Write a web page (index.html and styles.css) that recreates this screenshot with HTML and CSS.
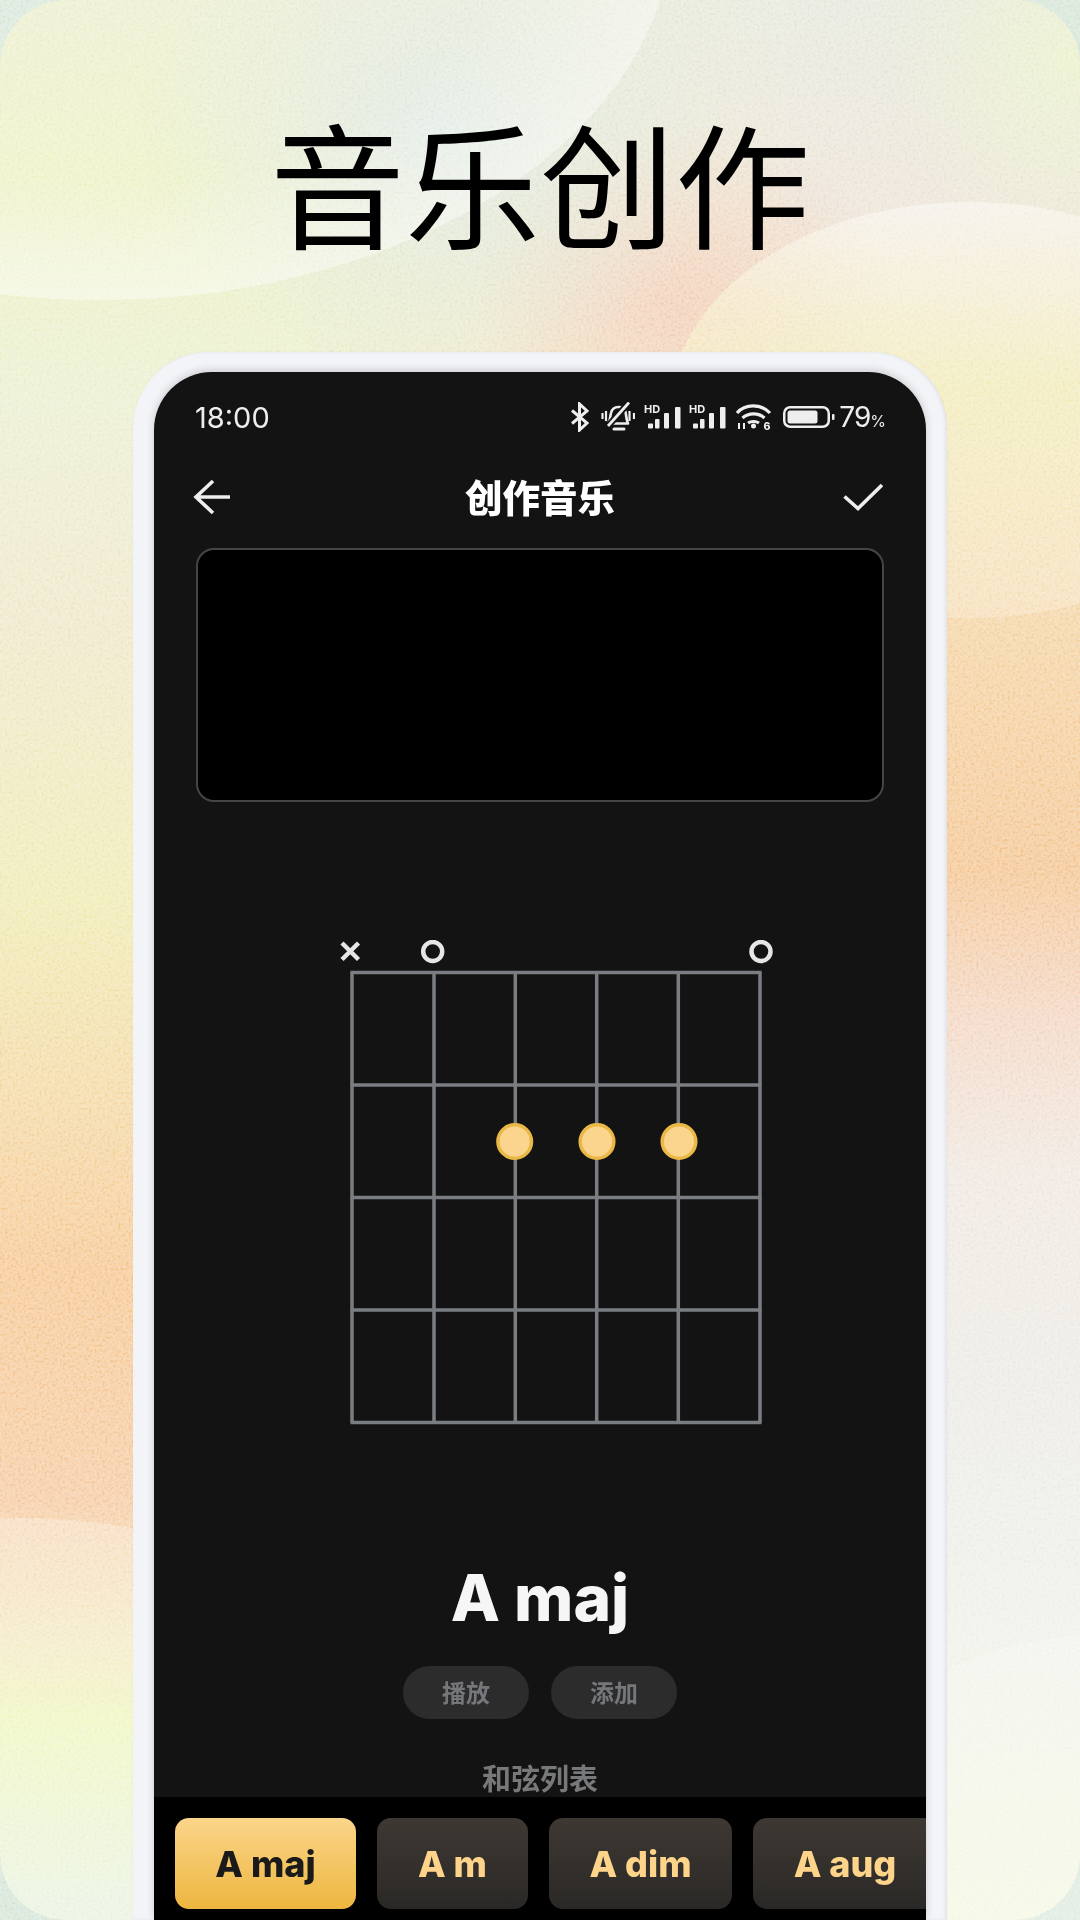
FILE: index.html
```html
<!DOCTYPE html>
<html lang="zh-CN">
<head>
  <meta charset="UTF-8" />
  <title>音乐创作</title>
  <link rel="stylesheet" href="styles.css">
</head>
<body>
  <div class="page">
    <!-- background wash -->
    <div class="wash wash-left"></div>
    <div class="wash wash-right"></div>
    <div class="wash wash-spots"></div>
    <div class="blob blob-top"></div>
    <div class="blob blob-right"></div>
    <div class="blob blob-bottom-left"></div>
    <div class="blob blob-bottom-right"></div>
    <svg class="grain" width="1080" height="1920">
      <filter id="grain-noise" x="0" y="0" width="100%" height="100%">
        <feTurbulence type="fractalNoise" baseFrequency="0.38" numOctaves="2" seed="4" />
        <feColorMatrix type="matrix" values="2.4 0 0 0 -0.7  2.4 0 0 0 -0.7  2.4 0 0 0 -0.7  0 0 0 0 1" />
      </filter>
      <rect width="1080" height="1920" filter="url(#grain-noise)" />
    </svg>

    <h1 class="headline">音乐创作</h1>

    <div class="phone">
      <div class="screen">
        <div class="status">
          <span class="time">18:00</span>
          <div class="status-icons">
            <svg class="ic-bt" width="20" height="30" viewBox="0 0 20 30">
              <path d="M2 8.500 17 21 9.500 28V2L17 9 2 21.500" fill="none" stroke="#eee" stroke-width="3" />
            </svg>
            <svg class="ic-bell" width="34" height="30" viewBox="0 0 34 30">
              <path d="M7 21.500c2.500-3 2-7 3-10.500 1-4 4-6 7.500-6 4 0 6 2 7 5 .8 3 .5 7 2.500 11.500z" fill="none" stroke="#eee" stroke-width="2.600" stroke-linejoin="round" />
              <path d="M13 27h10" stroke="#eee" stroke-width="3" stroke-linecap="round" />
              <path d="M7 24 28 .5" stroke="#131313" stroke-width="6.500" />
              <path d="M7 24 28 .5" stroke="#eee" stroke-width="2.800" />
              <path d="M1.500 11v6M5 9v10M28.500 9v10M33 11v6" stroke="#eee" stroke-width="2.200" />
            </svg>
            <svg class="ic-signal" width="37" height="28" viewBox="0 0 37 28">
              <text x="0" y="10" class="hd">HD</text>
              <rect x="4" y="20.500" width="5" height="5" rx="1" fill="#eee" />
              <rect x="11" y="16" width="4.500" height="9.500" rx="1" fill="#eee" />
              <rect x="20" y="10" width="5" height="15.500" rx="1" fill="#eee" />
              <rect x="31" y="4" width="5.500" height="21.500" rx="1" fill="#eee" />
            </svg>
            <svg class="ic-signal" width="37" height="28" viewBox="0 0 37 28">
              <text x="0" y="10" class="hd">HD</text>
              <rect x="4" y="20.500" width="5" height="5" rx="1" fill="#eee" />
              <rect x="11" y="16" width="4.500" height="9.500" rx="1" fill="#eee" />
              <rect x="20" y="10" width="5" height="15.500" rx="1" fill="#eee" />
              <rect x="31" y="4" width="5.500" height="21.500" rx="1" fill="#eee" />
            </svg>
            <svg class="ic-wifi" width="37" height="30" viewBox="0 0 37 30">
              <path d="M2 11C10 1.500 26 1.500 35 11M7.500 16c6-5.500 16-5.500 22 0M13 21c3-2 8-2 11 0" fill="none" stroke="#eee" stroke-width="3.200" />
              <circle cx="18.500" cy="24" r="2.500" fill="#eee" />
              <path d="M4 27v-6M9 27v-6" stroke="#eee" stroke-width="2" />
              <text x="28.500" y="28" class="wifi-six">6</text>
            </svg>
            <svg class="ic-batt" width="53" height="24" viewBox="0 0 53 24">
              <rect x="2.250" y="2.250" width="44.500" height="19.500" rx="6" fill="none" stroke="#eee" stroke-width="2.500" />
              <rect x="5.500" y="5.500" width="30" height="13" rx="2.500" fill="#eee" />
              <rect x="50" y="9" width="2.500" height="6" rx="1" fill="#eee" />
            </svg>
            <span class="batt-num">79<small>%</small></span>
          </div>
        </div>

        <div class="nav">
          <svg class="nav-back" width="40" height="36" viewBox="0 0 40 36">
            <path d="M37 18H3M20 2 3 18l17 16" fill="none" stroke="#eee" stroke-width="3.600" />
          </svg>
          <span class="nav-title">创作音乐</span>
          <svg class="nav-ok" width="40" height="28" viewBox="0 0 40 28">
            <path d="M1.500 13.500 15 25.500 39 2" fill="none" stroke="#eee" stroke-width="3.600" />
          </svg>
        </div>

        <div class="preview"></div>

        <svg class="chord-chart" width="435" height="490" viewBox="0 0 435 490">
          <g class="fret-lines">
            <path d="M12 32.500V482.500M94 32.500V482.500M175.300 32.500V482.500M256.700 32.500V482.500M338.300 32.500V482.500M420 32.500V482.500" />
            <path d="M10.500 32.500H421.500M10.500 145H421.500M10.500 257.500H421.500M10.500 370H421.500M10.500 482.500H421.500" />
          </g>
          <path class="mute" d="M2 3 18.500 19.500M18.500 3 2 19.500" />
          <circle class="open" cx="92.700" cy="11.500" r="9.500" />
          <circle class="open" cx="421" cy="11.500" r="9.500" />
          <circle class="finger" cx="174.700" cy="201.500" r="16.800" />
          <circle class="finger" cx="257" cy="201.500" r="16.800" />
          <circle class="finger" cx="339" cy="201.500" r="16.800" />
        </svg>

        <div class="chord-name">A maj</div>

        <div class="actions">
          <button class="pill">播放</button>
          <button class="pill">添加</button>
        </div>

        <div class="list-title">和弦列表</div>

        <div class="chord-band">
          <div class="chip active chip-maj">A maj</div>
          <div class="chip chip-m">A m</div>
          <div class="chip chip-dim">A dim</div>
          <div class="chip chip-aug">A aug</div>
        </div>
      </div>
    </div>
  </div>
</body>
</html>
```

FILE: styles.css
```css
* {
  box-sizing: border-box;
}

body {
  margin: 0;
  background: #e4ece6;
  font-family: "Inter", "Noto Sans CJK SC", sans-serif;
}

.page {
  position: relative;
  width: 1080px;
  height: 1920px;
  overflow: hidden;
  background: #dbe9dd;
}

/* background layers */
.wash,
.blob,
.grain {
  position: absolute;
}

.wash {
  inset: 0;
  border-radius: 66px;
}

.wash-left {
  background: linear-gradient(to bottom,
    #eef0d2 0,
    #eff3c8 170px,
    #eef2d6 400px,
    #f1ebd0 620px,
    #f2eebd 900px,
    #f6dcae 1120px,
    #f8cfa0 1270px,
    #f7d2ae 1500px,
    #f5ecc8 1640px,
    #f2f8ca 1720px,
    #edf5e4 1900px);
}

.wash-right {
  background: linear-gradient(to bottom,
    #e9ebe1 0,
    #efe8dd 200px,
    #f5e3c4 450px,
    #f6d9ae 640px,
    #f6cda0 870px,
    #f5dccb 1020px,
    #f2ebe4 1170px,
    #efeeea 1420px,
    #f2f3ec 1640px,
    #f5f8e2 1900px);
  -webkit-mask-image: linear-gradient(to right, transparent 300px, #000 800px);
  mask-image: linear-gradient(to right, transparent 300px, #000 800px);
}

.wash-spots {
  background:
    radial-gradient(ellipse 300px 240px at 440px 130px, #e1eae4 0, rgba(225, 234, 228, 0) 100%),
    radial-gradient(ellipse 210px 190px at 680px 310px, #f4d4c0 0, rgba(244, 212, 192, 0) 100%),
    radial-gradient(ellipse 190px 210px at 1070px 60px, #edf2d2 0, rgba(237, 242, 210, 0) 100%);
}

.blob {
  border-radius: 50%;
}

.blob-top {
  left: -473px;
  top: -460px;
  width: 1146px;
  height: 760px;
  background: radial-gradient(ellipse closest-side, rgba(255, 255, 255, 0.08) 70%, rgba(255, 255, 255, 0.42) 100%);
}

.blob-right {
  left: 670px;
  top: 202px;
  width: 600px;
  height: 416px;
  background: linear-gradient(to bottom, rgba(255, 255, 255, 0.45), rgba(244, 246, 190, 0.55) 45%, rgba(255, 255, 255, 0.22));
}

.blob-bottom-left {
  left: -380px;
  top: 1518px;
  width: 800px;
  height: 500px;
  background: linear-gradient(to bottom, rgba(255, 255, 255, 0.28), rgba(255, 255, 255, 0) 40%);
}

.blob-bottom-right {
  left: 780px;
  top: 1632px;
  width: 700px;
  height: 500px;
  background: rgba(255, 255, 255, 0.22);
}

.grain {
  left: 0;
  top: 0;
  opacity: 0.22;
  mix-blend-mode: overlay;
}

/* headline + phone */
.headline {
  position: relative;
  margin: 0;
  height: 352px;
  padding-top: 100px;
  text-align: center;
  font-family: "Noto Sans CJK SC", sans-serif;
  font-size: 135px;
  line-height: 160px;
  font-weight: 400;
  color: #000;
}

.phone {
  position: relative;
  width: 814px;
  height: 1568px;
  margin-left: 133px;
  padding: 20px 21px 0;
  background: #f3f4f8;
  border-radius: 76px 76px 0 0;
  box-shadow: inset -2px 0 3px rgba(120, 122, 130, 0.12), 0 0 2px rgba(120, 122, 130, 0.1);
}

.screen {
  height: 1548px;
  background: #131313;
  border-radius: 58px 58px 0 0;
  overflow: hidden;
  box-shadow: 0 -2px 8px rgba(0, 0, 0, 0.16);
}

/* status bar */
.status {
  display: flex;
  align-items: center;
  justify-content: space-between;
  height: 90px;
  padding: 0 40px 0 41px;
  color: #eee;
}

.time {
  font-size: 29px;
}

.status-icons {
  display: flex;
  align-items: center;
  gap: 8px;
}

.ic-bell {
  margin-left: 3px;
}

.ic-bell + .ic-signal {
  margin-left: 1px;
}

.ic-wifi {
  margin-left: 1px;
}

.ic-batt {
  margin-left: 2px;
}

.hd {
  font-family: "Inter", sans-serif;
  font-size: 11px;
  font-weight: 700;
  fill: #eee;
}

.wifi-six {
  font-family: "Inter", sans-serif;
  font-size: 10.500px;
  font-weight: 800;
  fill: #eee;
}

.batt-num {
  margin-left: -4px;
  font-size: 28px;
  letter-spacing: -1px;
}

.batt-num small {
  font-size: 16px;
  letter-spacing: 0;
}

/* nav */
.nav {
  display: flex;
  align-items: center;
  justify-content: space-between;
  height: 70px;
  padding: 0 43px 0 39px;
}

.nav-title {
  font-family: "Noto Sans CJK SC", sans-serif;
  font-size: 37.500px;
  line-height: 50px;
  margin: -2px 0 0 4px;
  font-weight: 900;
  color: #fff;
}

.preview {
  height: 254px;
  margin: 16px 42px 0;
  background: #000;
  border: 2px solid #454545;
  border-radius: 18px;
}

/* chord diagram */
.chord-chart {
  display: block;
  margin: 138px 0 0 186px;
}

.fret-lines path {
  fill: none;
  stroke: #7a7e83;
  stroke-width: 3.500;
}

.mute {
  fill: none;
  stroke: #e6e6e6;
  stroke-width: 4.500;
}

.open {
  fill: none;
  stroke: #e6e6e6;
  stroke-width: 4.500;
}

.finger {
  fill: #fbd48d;
  stroke: #eab845;
  stroke-width: 3.500;
}

.chord-name {
  height: 80px;
  margin-top: 128px;
  text-align: center;
  font-size: 64px;
  line-height: 80px;
  font-weight: 800;
  color: #f6f6f6;
}

.actions {
  display: flex;
  justify-content: center;
  gap: 22px;
  margin-top: 28px;
}

.pill {
  width: 126px;
  height: 53px;
  padding: 0 0 2px;
  border: none;
  border-radius: 27px;
  background: #2c2c2d;
  color: #75777a;
  font-family: "Noto Sans CJK SC", sans-serif;
  font-size: 24px;
  font-weight: 700;
}

.list-title {
  height: 35px;
  margin-top: 41px;
  margin-bottom: 2px;
  text-align: center;
  font-family: "Noto Sans CJK SC", sans-serif;
  font-size: 29px;
  line-height: 35px;
  font-weight: 700;
  color: #77787a;
}

/* chord strip at the bottom */
.chord-band {
  display: flex;
  gap: 21px;
  height: 123px;
  padding: 21px 0 0 21px;
  background: #000;
}

.chip {
  flex: none;
  display: flex;
  align-items: center;
  justify-content: center;
  height: 91px;
  border-radius: 14px;
  background: linear-gradient(to bottom, #3e3833, #2a2826);
  color: #fdd48a;
  font-size: 36px;
  font-weight: 800;
}

.chip.active {
  background: linear-gradient(to bottom, #fbd58a, #edb63f);
  color: #1a1a1a;
}

.chip-maj {
  width: 181px;
}

.chip-m {
  width: 151px;
}

.chip-dim {
  width: 183px;
}

.chip-aug {
  width: 184px;
}
```
